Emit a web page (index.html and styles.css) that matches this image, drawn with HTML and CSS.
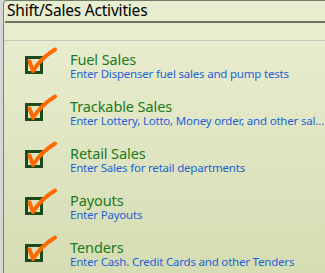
FILE: index.html
```html
<!DOCTYPE html>
<html>
<head>
<meta charset="utf-8">
<link rel="stylesheet" href="styles.css">
</head>
<body>
<div class="frame">
  <div class="panel">
    <div class="header">Shift/Sales Activities</div>
    <div class="band"></div>
    <div class="content">
      <div class="item">
        <svg class="icon" width="34" height="28" viewBox="0 0 34 28"><rect x="2.5" y="10.5" width="15" height="15" fill="#e4e8c6" stroke="#1d4a1b" stroke-width="3"/><path d="M5.5 14.5 L9 24 Q17 11 31 2.5" fill="none" stroke="#ff6a00" stroke-width="4" stroke-linecap="round" stroke-linejoin="round"/></svg>
        <div class="text"><div class="title">Fuel Sales</div><div class="sub">Enter Dispenser fuel sales and pump tests</div></div>
      </div>
      <div class="item">
        <svg class="icon" width="34" height="28" viewBox="0 0 34 28"><rect x="2.5" y="10.5" width="15" height="15" fill="#e2e7c3" stroke="#1d4a1b" stroke-width="3"/><path d="M5.5 14.5 L9 24 Q17 11 31 2.5" fill="none" stroke="#ff6a00" stroke-width="4" stroke-linecap="round" stroke-linejoin="round"/></svg>
        <div class="text"><div class="title">Trackable Sales</div><div class="sub">Enter Lottery, Lotto, Money order, and other sales</div></div>
      </div>
      <div class="item">
        <svg class="icon" width="34" height="28" viewBox="0 0 34 28"><rect x="2.5" y="10.5" width="15" height="15" fill="#dfe4bf" stroke="#1d4a1b" stroke-width="3"/><path d="M5.5 14.5 L9 24 Q17 11 31 2.5" fill="none" stroke="#ff6a00" stroke-width="4" stroke-linecap="round" stroke-linejoin="round"/></svg>
        <div class="text"><div class="title">Retail Sales</div><div class="sub">Enter Sales for retail departments</div></div>
      </div>
      <div class="item">
        <svg class="icon" width="34" height="28" viewBox="0 0 34 28"><rect x="2.5" y="10.5" width="15" height="15" fill="#dce2ba" stroke="#1d4a1b" stroke-width="3"/><path d="M5.5 14.5 L9 24 Q17 11 31 2.5" fill="none" stroke="#ff6a00" stroke-width="4" stroke-linecap="round" stroke-linejoin="round"/></svg>
        <div class="text"><div class="title">Payouts</div><div class="sub">Enter Payouts</div></div>
      </div>
      <div class="item">
        <svg class="icon" width="34" height="28" viewBox="0 0 34 28"><rect x="2.5" y="10.5" width="15" height="15" fill="#d9dfb6" stroke="#1d4a1b" stroke-width="3"/><path d="M5.5 14.5 L9 24 Q17 11 31 2.5" fill="none" stroke="#ff6a00" stroke-width="4" stroke-linecap="round" stroke-linejoin="round"/></svg>
        <div class="text"><div class="title">Tenders</div><div class="sub">Enter Cash. Credit Cards and other Tenders</div></div>
      </div>
    </div>
  </div>
</div>
</body>
</html>
```
FILE: styles.css
```css
html, body {
  margin: 0;
  padding: 0;
  background: #dcdcdc;
}
body {
  width: 325px;
  height: 273px;
  overflow: hidden;
  font-family: "Noto Sans", "Open Sans", sans-serif;
}
.frame {
  height: 273px;
  padding-left: 3px;
  background: #d6d6d6;
}
.panel {
  height: 273px;
  border-left: 1px solid #7c8078;
  border-top: 1px solid #6f7a68;
  border-top-left-radius: 4px;
  background: #e9edcf;
  overflow: hidden;
}
.header {
  height: 20px;
  border-bottom: 2px solid #6b7564;
  padding-left: 2px;
  font-size: 15.5px;
  line-height: 19px;
  color: #000;
  letter-spacing: -0.2px;
  margin-left: 1px;
}
.band {
  height: 17px;
  border-bottom: 1px solid #c4c6bc;
}
.content {
  height: 240px;
  padding-top: 6px;
  padding-left: 20px;
  background: linear-gradient(#e8ecce, #d4dcb1);
}
.item {
  display: flex;
  align-items: flex-start;
  height: 47px;
}
.icon {
  flex: none;
  display: block;
}
.text {
  margin-left: 12px;
  margin-top: 5px;
  min-width: 0;
  flex: 1;
}
.title {
  font-size: 14.5px;
  line-height: 14px;
  color: #1c7a1c;
  letter-spacing: -0.1px;
}
.sub {
  font-size: 11.5px;
  line-height: 16px;
  color: #2262d6;
  white-space: nowrap;
  overflow: hidden;
  text-overflow: ellipsis;
  letter-spacing: -0.2px;
}
```
